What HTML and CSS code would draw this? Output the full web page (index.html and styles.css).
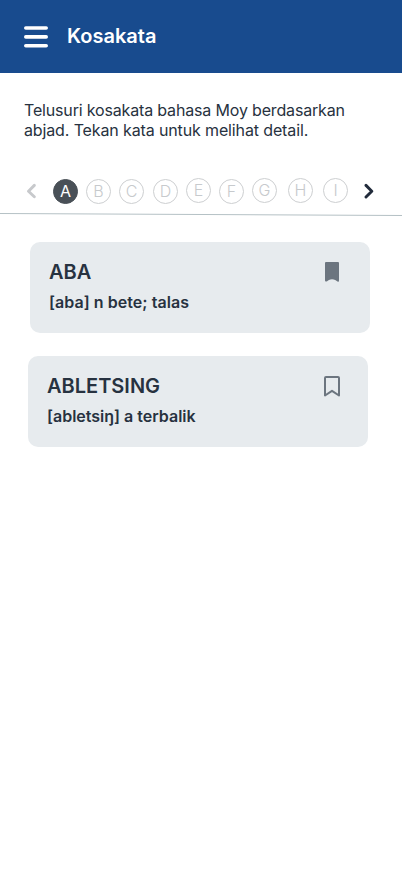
FILE: index.html
```html
<!DOCTYPE html>
<html lang="id">
<head>
<meta charset="utf-8">
<meta name="viewport" content="width=device-width, initial-scale=1">
<title>Kosakata</title>
<link rel="stylesheet" href="styles.css">
</head>
<body>
<header class="topbar">
  <svg class="menu" width="24" height="22" viewBox="0 0 24 22"><path d="M1.8 2h20.4M1.8 10.9h20.4M1.8 19.7h20.4" fill="none" stroke="#fff" stroke-width="3.6" stroke-linecap="round"/></svg>
  <h1 class="title">Kosakata</h1>
</header>
<main>
  <p class="intro"><span class="line-one">Telusuri kosakata bahasa Moy berdasarkan</span><br><span class="line-two">abjad. Tekan kata untuk melihat detail.</span></p>
  <nav class="alphabet">
    <svg class="prev" width="10" height="16" viewBox="0 0 10 16"><path d="M8.3 2.4 2.5 8.2l5.8 5.6" fill="none" stroke="#c7c9cc" stroke-width="2.9" stroke-linecap="round" stroke-linejoin="round"/></svg>
    <div class="letters">
      <span class="letter active">A</span>
      <span class="letter low">B</span>
      <span class="letter low">C</span>
      <span class="letter low wide">D</span>
      <span class="letter">E</span>
      <span class="letter low">F</span>
      <span class="letter">G</span>
      <span class="letter wider">H</span>
      <span class="letter last">I</span>
    </div>
    <svg class="next" width="10" height="16" viewBox="0 0 10 16"><path d="M2 2.4 7.8 8.2 2 14" fill="none" stroke="#212b3b" stroke-width="2.9" stroke-linecap="round" stroke-linejoin="round"/></svg>
  </nav>
  <svg class="rule" width="402" height="4" viewBox="0 0 402 4"><path d="M0 .5 402 2.5" stroke="#b5c1c5" stroke-width="1"/></svg>
  <section class="words">
    <article class="card first">
      <div>
        <h2 class="word">ABA</h2>
        <p class="meaning meaning-first">[aba] n bete; talas</p>
      </div>
      <svg class="bookmark" width="18" height="22" viewBox="0 0 18 22"><path d="M1 1h12a1 1 0 0 1 1 1v17.5q0 1.8-1.5 1L10.2 19q-3.2-1.6-6.3 0l-1.8 1.3Q0 21.2 0 19.5V2a1 1 0 0 1 1-1Z" fill="#6c757f"/></svg>
    </article>
    <article class="card second">
      <div>
        <h2 class="word">ABLETSING</h2>
        <p class="meaning">[abletsiŋ] a terbalik</p>
      </div>
      <svg class="bookmark" width="18" height="22" viewBox="0 0 18 22"><path d="M3 2h12a1 1 0 0 1 1 1v17.5l-7-4.7-7 4.7V3a1 1 0 0 1 1-1Z" fill="none" stroke="#6c757f" stroke-width="2" stroke-linejoin="round"/></svg>
    </article>
  </section>
</main>
</body>
</html>
```

FILE: styles.css
```css
* { box-sizing: border-box; margin: 0; padding: 0; }
body { background: #fff; color: #273240; font-family: Inter, "Liberation Sans", sans-serif; min-height: 874px; }
svg { display: block; flex: none; }
.topbar { display: flex; align-items: center; height: 73px; padding-left: 24px; gap: 19px; background: #184b8e; }
.title { padding-bottom: 2px; color: #fff; font-size: 20px; line-height: 24px; font-weight: 600; }
.intro { padding: 27px 0 0 24px; font-size: 16px; line-height: 20px; white-space: nowrap; }
.line-one { letter-spacing: -0.165px; }
.line-two { letter-spacing: -0.13px; }
.alphabet { display: flex; align-items: center; height: 26px; margin-top: 38px; padding-left: 26px; }
.letters { display: flex; align-items: flex-start; gap: 8px; height: 26px; margin: 0 16px 0 17px; }
.letter { width: 25px; height: 25px; border: 1px solid #cdcfd1; border-radius: 50%; color: #c7cacd; font-size: 16px; line-height: 23px; font-weight: 300; text-align: center; }
.low { margin-top: 1px; }
.active { margin-top: 1px; background: #495057; border-color: #495057; color: #fff; font-weight: 400; }
.wide { margin-left: 1px; }
.wider { margin-left: 3px; }
.last { margin-left: 2px; }
.rule { margin-top: 9px; }
.words { display: flex; flex-direction: column; gap: 23px; padding-top: 25px; }
.card { display: flex; justify-content: space-between; width: 340px; height: 91px; padding: 18px 27px 0 19px; border-radius: 10px; background: #e7ebee; }
.first { margin-left: 30px; }
.second { margin-left: 28px; }
.first .bookmark { margin-right: 0; }
.word { font-size: 20px; line-height: 24px; font-weight: 600; }
.meaning { margin-top: 8px; font-size: 16px; line-height: 20px; font-weight: 600; white-space: nowrap; }
.meaning-first { letter-spacing: 0.05px; }
.bookmark { margin-top: 1px; }
```
